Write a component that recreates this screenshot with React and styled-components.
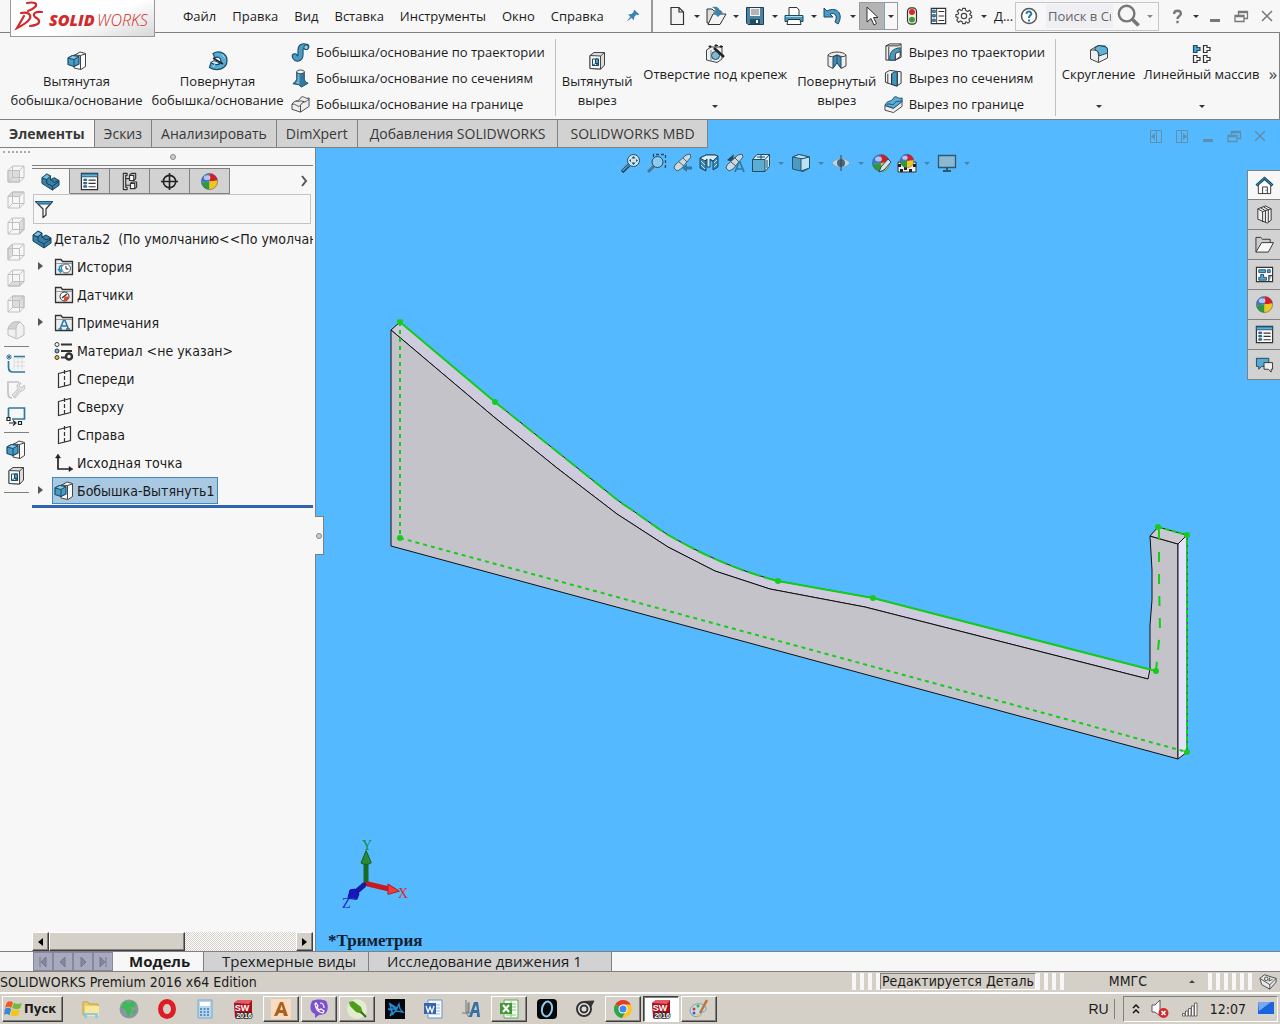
import React, { useState } from "react";
import styled, { createGlobalStyle, css } from "styled-components";

const theme = {
  ui: '"Open Sans", "Noto Sans", sans-serif',
  tahoma: '"DejaVu Sans Condensed", "DejaVu Sans", sans-serif',
  face: "#f7f7f7",
  line: "#808080",
  tab: "#d2d2d2",
  sky: "#55b9ff",
  classic: "#d4d0c8",
};

const GlobalStyle = createGlobalStyle`
  * { box-sizing: border-box; }
  body { margin: 0; background: ${theme.face}; overflow: hidden; }
  button, input { font: inherit; color: inherit; }
`;

/* ---------- icons ---------- */

const blue = "#4a9cc4";
const dark = "#1d5578";
const ink = "#333";
const st = { stroke: ink, strokeWidth: 1.2, fill: "none" };

const Ball = () => (
  <g>
    <path d="M10 10V1.500A8.500 8.500 0 0 0 1.500 11Z" fill="#3e74d8" />
    <path d="M10 10V1.500A8.500 8.500 0 0 1 18.500 9Z" fill="#cf1f2b" />
    <path d="M10 10L1.500 11A8.500 8.500 0 0 0 10 18.500Z" fill="#2f9a3c" />
    <path d="M10 10L18.500 9A8.500 8.500 0 0 1 10 18.500Z" fill="#f0c81c" />
    <circle cx="10" cy="10" r="8.500" fill="none" stroke="#444" strokeOpacity=".5" />
    <ellipse cx="7.500" cy="6" rx="3.500" ry="2.500" fill="#fff" opacity=".6" />
  </g>
);

const Folder = ({ children }) => (
  <g>
    <path d="M1.500 17.500V2.500H7L8.500 4.500H18.500V17.500Z" fill="#eee" stroke={ink} strokeWidth="1.300" />
    <path d="M2 6.500H18" stroke="#999" />
    {children}
  </g>
);

const Binoculars = () => (
  <g stroke="#3b6277" fill="#cfd8dd">
    <path d="M2 12L13 2L17 1L18 4L8 16L4 18L1 15Z" />
    <path d="M6 9L11 13M10 5L14 9" />
  </g>
);

const glyphs = {
  extrude: (
    <g strokeLinejoin="round">
      <path d="M7 4.500L13 1L18.500 2.500V15.500L14 18.500L7 17Z" fill="#fafafa" stroke="#444" />
      <path d="M13.500 4.500L18 3M13.500 4.500V18M7 4L13.500 4.500" stroke="#444" />
      <path d="M1 7L5.500 4.500L12 5.500V13L7 15.500L1 13.500Z" fill={blue} stroke="#174a69" strokeWidth="1.200" />
      <path d="M1 7L7 8.500L12 5.500L5.500 4.500Z" fill="#8cc6e0" stroke="#174a69" />
      <path d="M7 8.500V15.500" stroke="#174a69" />
    </g>
  ),
  revolve: (
    <g>
      <path d="M5 2.500C11-1 19 2 19 9.500C19 18 9 21 1.500 16.500L3 11.500C7 15 12 14 13 10.500C13 6.500 9.500 5 7 7Z" fill="#5bacd3" stroke="#174a69" strokeWidth="1.200" />
      <path d="M5 7L15 13" stroke="#222" strokeWidth="1.500" />
      <path d="M3 11.500L6 9.500L12 12" fill="#b7e1f4" stroke="#174a69" />
      <path d="M14 3L17 7M5 16L7 13" stroke="#b7e1f4" />
    </g>
  ),
  sweep: (
    <g fill="none" strokeLinecap="round">
      <path d="M4 14C5 18 10 17 10 12V8C10 3 13 3 16 4" stroke="#174a69" strokeWidth="6.500" />
      <path d="M4 14C5 18 10 17 10 12V8C10 3 13 3 16 4" stroke={blue} strokeWidth="4.300" />
      <circle cx="16" cy="4.500" r="2.500" fill="#8cc6e0" stroke="#174a69" />
    </g>
  ),
  loft: (
    <g stroke="#174a69" strokeLinejoin="round">
      <path d="M6 3V10C6 12 4 14 2 15.500L8 16.500L11 19L18 15C15 14 14 12 14 10V3Z" fill="#34799f" />
      <path d="M7 5L9 4V16L8 16L5 15Q7 13 7 10Z" fill="#6fb2d2" stroke="none" />
      <ellipse cx="10" cy="3" rx="4" ry="2" fill="#e6f3f8" stroke="#444" />
    </g>
  ),
  boundary: (
    <g stroke="#444" fill="#eee" strokeLinejoin="round">
      <path d="M1 10C4 4 7 9 11 2C14 1 16 5 19 3V12L10 18L1 15Z" />
      <path d="M1 10C5 8 7 14 10 11C12 6 15 9 19 4M10 11V18M5 6C8 8 9 5 14 7" fill="none" />
    </g>
  ),
  boundaryCut: (
    <g stroke="#174a69" strokeLinejoin="round">
      <path d="M1 11L10 14L19 6V12L10 18.500L1 16Z" fill="#eee" stroke="#444" />
      <path d="M1 11C4 4 7 9 11 2C14 1 16 5 19 3V7L10 14Z" fill="#5eadd3" />
      <path d="M3 10C7 8 8 12 11 9C13 5 15 8 18 6" fill="none" />
    </g>
  ),
  cut: (
    <g stroke="#444" strokeLinejoin="round">
      <path d="M3 4.500L7 1.500H17.500V14L14 18L3 17.500Z" fill="#ddd" />
      <path d="M3 4.500L13.500 5V18L3 17.500Z" fill="#f7f7f7" />
      <path d="M13.500 5L17.500 1.500" />
      <path d="M5.500 8H11.500V14.500H5.500Z" fill="#fff" stroke="#174a69" />
      <path d="M8.500 8H11.500V14.500L8.500 12.500Z" fill={blue} stroke="#174a69" />
      <path d="M5.500 14.500L8.500 12.500H11.500" fill="none" stroke="#174a69" />
    </g>
  ),
  hole: (
    <g stroke="#444" strokeLinejoin="round">
      <path d="M1.500 6L6 3H17V15L12 18.500L1.500 16Z" fill="#eee" />
      <path d="M6 6V17" stroke="#888" />
      <circle cx="10.500" cy="11.500" r="4" fill="#81b9d2" stroke="#174a69" />
      <path d="M9 4L19 13" stroke="#222" strokeWidth="2.500" />
      <path d="M5 1V4M3.500 2.500H6.500M16 1V4M14.500 2.500H18M11 0V3M9.500 1.500H13" stroke="#222" />
    </g>
  ),
  revolveCut: (
    <g strokeLinejoin="round">
      <path d="M1 4C4 0 16 0 19 4V15L14 17.500L10 11L6 17.500L1 15Z" fill="#eee" stroke="#444" />
      <path d="M6 6L10 4L14 6V17L10 12L6 17Z" fill="#3e8db4" stroke="#174a69" />
      <path d="M1 4C3 7 8 5 10 4C13 5 17 7 19 4M10 4V12" fill="none" stroke="#444" />
    </g>
  ),
  sweepCut: (
    <g stroke="#333">
      <path d="M2 3L6 1H18V15L12 18H2Z" fill="#eee" />
      <path d="M5 4V18M2 3H15L18 1" fill="none" />
      <path d="M6 18C6 9 9 6 17 5V13L12 14V18Z" fill="#4b9ac0" stroke="#174a69" />
      <path d="M12 18V11L17 9V14Z" fill="#fff" />
    </g>
  ),
  loftCut: (
    <g stroke="#333" strokeLinejoin="round">
      <path d="M1.500 4L6 1.500L18 3V15L13 18L1.500 14Z" fill="#f3f3f3" />
      <path d="M8 5L11 3H14V18L8 16Z" fill="#4596be" stroke="#174a69" />
      <path d="M4 5V15M8 5V16M14 4V18" />
    </g>
  ),
  fillet: (
    <g stroke="#444" strokeLinejoin="round">
      <path d="M1.500 6L9 1.500L16 2C18 3 18.500 5 18.500 6V14L9.500 18.500L1.500 15Z" fill="#f0f0f0" />
      <path d="M6 3.500L10 1.500L17 3C18.500 4 18.500 6 18.500 9L10 12C10 9 9.500 7 6 6Z" fill="#65b1d6" stroke="#174a69" />
      <path d="M1.500 6L6 6C9 7 10 8 9.500 18.500" fill="none" />
    </g>
  ),
  pattern: (
    <g stroke="#333" strokeWidth="1.200" fill="#f7f7f7">
      <path d="M1.500 1.500H5V3.500H8V6.500H5V8.500H1.500Z" fill="#4da3cc" stroke="#174a69" />
      <path d="M11.500 1.500H15V3.500H18V6.500H15V8.500H11.500Z" />
      <path d="M1.500 11.500H5V13.500H8V16.500H5V18.500H1.500Z" />
      <path d="M11.500 11.500H15V13.500H18V16.500H15V18.500H11.500Z" />
    </g>
  ),
  pin: (
    <g fill="#3c84ad">
      <path d="M12 1L19 8L17 9L15 8L12 11L11 16L3 8L8 7L11 4L11 2Z" />
      <path d="M6 11L1 18L8 13Z" />
    </g>
  ),
  newDoc: <path d="M4 1.500H12L16.500 6V18.500H4ZM12 1.500V6H16.500" fill="#f4f4f4" stroke={ink} strokeWidth="1.200" />,
  open: (
    <g stroke={ink} strokeLinejoin="round">
      <path d="M1 17V3H6L8 5H15V17Z" fill="#ddd" />
      <path d="M2 18.500L7 8H20L14 18.500Z" fill="#f4f4f4" />
      <path d="M6 1C11 0 14 2 14 6H17L12 11L7 6H10C10 4 9 3 6 1Z" fill="#3c84ad" stroke="none" />
    </g>
  ),
  save: (
    <g>
      <path d="M1.500 1.500H18.500V18.500H3L1.500 17Z" fill="#4b83a3" stroke="#1b3e54" />
      <path d="M5 2H15V10H5Z" fill="#f4f4f4" />
      <path d="M6 4H14M6 6H14M6 8H14" stroke="#777" />
      <path d="M5 13H15V18H5Z" fill="#244b60" />
      <path d="M11 14H13V17H11Z" fill="#fff" />
    </g>
  ),
  print: (
    <g stroke={ink}>
      <path d="M5 9V1.500H13L15 4V9" fill="#fff" />
      <path d="M1 9.500H19V15.500H1Z" fill="#4d99bd" stroke="#174a69" />
      <path d="M4 13.500H16L17 18.500H3Z" fill="#fff" />
      <path d="M2 10.500H18" stroke="#aadaf0" />
    </g>
  ),
  undo: <path d="M1 2V11H10L7 8C12 6 15 10 12 16L15 18C21 8 14 0 4 5Z" fill="#4b9bc5" stroke="#174a69" />,
  cursor: <path d="M5 1V16L9 12.500L12 19L14.500 17.500L11.500 11.500H16Z" fill="#fff" stroke="#333" />,
  traffic: (
    <g>
      <rect x="5" y="1" width="10" height="18" rx="4" fill="#eee" stroke={ink} strokeWidth="1.300" />
      <circle cx="10" cy="5.500" r="3.300" fill="#d72b16" />
      <circle cx="10" cy="14" r="3.300" fill="#3b9c34" />
    </g>
  ),
  list: (
    <g>
      <path d="M2.500 1.500H18.500V18.500H2.500Z" fill="#fff" stroke={ink} strokeWidth="1.300" />
      <path d="M8.500 2V18" stroke={ink} />
      <path d="M4 3.500H7V6H4ZM4 8.500H7V11H4ZM4 13.500H7V16H4Z" fill={blue} stroke={dark} />
      <path d="M10.500 5H17M10.500 10H17M10.500 15H17" stroke={ink} strokeWidth="1.300" />
    </g>
  ),
  gear: (
    <g fill="none" stroke="#444">
      <path d="M8.500 1.500H11.500L12 4L14 5L16 3.500L18 6L16.500 8L17 9L18.500 9.500V12L16 12.500L15.500 14L16.500 16L14.500 18L12.500 16.500L11.500 17V18.500H8.500L8 16.500L6 15.500L4 17L2 14.500L3.500 12.500L3 11.500L1 11V8.500L3.500 8L4 6.500L2.500 4.500L5 2.500L7 4L8 3.500Z" strokeWidth="1.300" strokeLinejoin="round" />
      <circle cx="10" cy="10" r="3" strokeWidth="1.300" />
    </g>
  ),
  help: (
    <g>
      <circle cx="10" cy="10" r="7.500" fill="#fff" stroke="#555" strokeWidth="1.500" />
      <path d="M7.500 8C7.500 4.500 12.500 5 12.300 8C12 9.500 10 9.500 10 12M10 13.500V15.500" fill="none" stroke="#287aa8" strokeWidth="2" />
    </g>
  ),
  question: <path d="M6 7C6 2 14 2 14 7C14 9 10 9.500 10 13M10 15V18" fill="none" stroke="#777" strokeWidth="2.700" />,
  magnifier: (
    <g fill="none" stroke="#777">
      <circle cx="8" cy="8" r="6.500" strokeWidth="2" />
      <path d="M12.500 12.500L18 18" strokeWidth="3" />
    </g>
  ),
  minimize: <path d="M5 13H15V16H5Z" fill="currentColor" />,
  restore: (
    <g fill="none" stroke="currentColor" strokeWidth="1.300">
      <path d="M4 9.500H13V15.500H4ZM4 10.500H13M7.500 9V5.500H16.500V12.500H13M7.500 6.500H16.500" />
    </g>
  ),
  close: <path d="M5 5L15 15M15 5L5 15" stroke="currentColor" strokeWidth="1.500" />,
  paneLeft: (
    <g>
      <path d="M4.500 4.500H15.500V16.500H4.500ZM10.500 4.500V16.500" fill="none" stroke="currentColor" />
      <path d="M9 7V14L5 10.500Z" fill="currentColor" />
    </g>
  ),
  paneRight: (
    <g>
      <path d="M4.500 4.500H15.500V16.500H4.500ZM9.500 4.500V16.500" fill="none" stroke="currentColor" />
      <path d="M11 7V14L15 10.500Z" fill="currentColor" />
    </g>
  ),
  part: (
    <g stroke="#123f5a" strokeLinejoin="round">
      <path d="M1 6L6 2L10 4V8L14 6L19 9V14L12 19L1 12Z" fill="#397fa6" />
      <path d="M1 6L6 8L10 4M6 8V12L12 15L19 10M12 15V19M10 8L14 11L19 9" fill="none" stroke="#123f5a" />
      <path d="M2 6L6 3L9 4.500L6 7Z" fill="#7fc0df" stroke="none" />
    </g>
  ),
  sheet: (
    <g>
      <path d="M1.500 1.500H18.500V18.500H1.500Z" fill="#fff" stroke={ink} strokeWidth="1.300" />
      <path d="M1.500 2H18.500V5H1.500Z" fill="#5eb2da" stroke={dark} />
      <path d="M4 7.500H7V9H4ZM4 11H7V12.500H4ZM4 14.500H7V16H4Z" fill={blue} stroke={dark} />
      <path d="M9 8.500H16.500M9 12H16.500M9 15.500H16.500" stroke={ink} strokeWidth="1.200" />
    </g>
  ),
  config: (
    <g {...st} strokeLinejoin="round">
      <path d="M3.500 1.500H7.500V3.500H6V16H7.500V18.500H3.500ZM6 7H10M6 14H11" />
      <path d="M10 3.500H14.500V9H10ZM11 12H15.500V17.500H11Z" fill="#f7f7f7" />
      <path d="M10 3.500L12 1.500H16.500V7L14.500 9M11 12L13 10.500H17.500V16L15.500 17.500" />
    </g>
  ),
  target: (
    <g fill="none" stroke="#222" strokeWidth="1.700">
      <circle cx="10" cy="10" r="6.500" />
      <path d="M10 1V19M1 10H19" />
    </g>
  ),
  ball: <Ball />,
  filter: (
    <g strokeLinejoin="round">
      <path d="M1.500 2.500H18.500L12 10V16L9 18.500V10Z" fill="#f7f7f7" stroke={ink} strokeWidth="1.200" />
      <path d="M1.500 2.500H18.500L16 5H4Z" fill={blue} stroke={dark} />
    </g>
  ),
  history: (
    <Folder>
      <circle cx="12" cy="11.500" r="4.500" fill="#fff" stroke="#45606e" />
      <path d="M12 9V12H14.500" fill="none" stroke={ink} />
      <path d="M8.500 8C5 9 5 11 6 13M4 12L6.500 15L8 12" fill="none" stroke="#2c8abb" strokeWidth="1.700" />
    </Folder>
  ),
  sensor: (
    <Folder>
      <circle cx="10.500" cy="11.500" r="4.500" fill="#fff" stroke={ink} />
      <path d="M10.500 11.500H15A4.500 4.500 0 0 1 9.500 16Z" fill="#d94a32" />
      <path d="M8 13L13 9" stroke={ink} strokeWidth="1.500" />
    </Folder>
  ),
  note: (
    <Folder>
      <path d="M6 16L9.500 7.500H11L14.500 16M8 13H12.500M4.500 16H8M12 16H16" fill="none" stroke="#2578a3" strokeWidth="1.500" />
    </Folder>
  ),
  material: (
    <g stroke={ink}>
      <circle cx="3" cy="3.500" r="2" fill="#fff" />
      <circle cx="3" cy="10" r="2" fill="#68b9e0" />
      <circle cx="3" cy="16.500" r="2" fill="#eec02b" />
      <path d="M7 3.500H18M7 10H18M7 16.500H12" strokeWidth="1.800" />
      <circle cx="15" cy="15.500" r="3" fill="#f7f7f7" strokeWidth="2.500" />
    </g>
  ),
  plane: (
    <g {...st}>
      <path d="M4.500 4.500L16.500 1.500V15.500L4.500 18.500Z" />
      <path d="M10.500 1V19" strokeDasharray="4 2" />
    </g>
  ),
  origin: (
    <g fill="none" stroke="#222" strokeWidth="1.700">
      <path d="M4 3V16H17" />
      <path d="M1.500 5L4 1L6.500 5ZM15 13.500L19 16L15 18.500Z" fill="#222" strokeWidth=".5" />
    </g>
  ),
  sketch: (
    <g fill="none">
      <path d="M8 4H19M8 8H19M8 12H19M8 3V16M12 3V16M16 3V16" stroke="#ddd" />
      <path d="M8 2.500H19M2.500 7V13C2.500 17 4 18 7 18H19" stroke="#2d789e" strokeWidth="1.700" />
      <path d="M3 0V6M0 3H6M1 1L5 5M5 1L1 5" stroke="#2d789e" />
    </g>
  ),
  repair: (
    <g fill="none" stroke="#c3c3c3">
      <path d="M13 2H2V13C2 16 3 18 6 18" strokeWidth="1.700" />
      <path d="M8 17L14 9M18 5L16 8L13 6L15 3C11 3 10 6 12 9L6 15L9 18L15 11C18 11 20 8 18 5" fill="#e6e6e6" />
    </g>
  ),
  rectTool: (
    <g fill="none" stroke="#222">
      <path d="M2.500 2H18.500V13H12M2.500 2V11M6 13H12" stroke="#2d789e" strokeWidth="1.700" />
      <path d="M1 11.500H4V14.500H1ZM12.500 15.500H15.500V18.500H12.500ZM3 17H9M7 14.500L10 17L7 19.500" strokeWidth="1.200" />
    </g>
  ),
  house: (
    <g>
      <path d="M3.500 9V18.500H16.500V9L10 3Z" fill="#fff" stroke={ink} />
      <path d="M8 18V11.500H13V18M11 15H12" fill="none" stroke={ink} />
      <path d="M1.500 10L10 2.500L18.500 10" fill="none" stroke="#174a69" strokeWidth="3" />
      <path d="M2 9.500L10 2.500L18 9.500" fill="none" stroke="#4796bd" />
    </g>
  ),
  books: (
    <g stroke={ink} fill="#f0f0f0" strokeLinejoin="round">
      <path d="M3 4L11 1L17 4V16L13 19L3 15Z" />
      <path d="M3 4L8 7V18M6 3L11 6V18M9 2L14 5V18M8 7L17 4" fill="none" />
    </g>
  ),
  folderOpen: (
    <g stroke={ink} strokeLinejoin="round">
      <path d="M1 18V2.500H6L8 4.500H16V8" fill="#ccc" />
      <path d="M1 18L7 8H19.500L14 18Z" fill="#f8f8f8" />
    </g>
  ),
  palette: (
    <g>
      <path d="M1.500 2.500H18.500V17.500H1.500Z" fill="#fff" stroke={ink} strokeWidth="1.200" />
      <path d="M4 5H11V8H4ZM13 5H16V8H13ZM6 10H9V13H12V16H4V13H6Z" fill="#5ba7ca" stroke={dark} />
      <path d="M14.500 17V11H18" fill="#999" stroke={ink} />
    </g>
  ),
  chat: (
    <g strokeLinejoin="round">
      <path d="M1.500 3.500H14.500V12H7L4 15V12H1.500Z" fill="#5ba9ce" stroke="#174a69" />
      <path d="M9.500 8H18.500V15H17V18L14 15H9.500Z" fill="#eee" stroke={ink} />
    </g>
  ),
  zoomFit: (
    <g fill="none" stroke="#29485c">
      <path d="M1 19L8 12" stroke="#174a69" strokeWidth="3.500" />
      <path d="M1.500 18L7.500 12" stroke="#a9d4ea" />
      <circle cx="12.500" cy="7.500" r="6" fill="#c9e7f6" />
      <path d="M12.500 3L14.500 5.500H10.500ZM12.500 12L14.500 9.500H10.500ZM8 7.500L10 6V9ZM17 7.500L15 6V9Z" fill="#29485c" stroke="none" />
    </g>
  ),
  zoomArea: (
    <g fill="none" stroke="#29485c">
      <path d="M6.500 4V1.500H18.500V14H16" strokeDasharray="3 2" strokeWidth="1.300" />
      <path d="M1 19L7 13" stroke="#4f7790" strokeWidth="3" />
      <circle cx="10.500" cy="9" r="5.500" fill="#8bcbf0" />
    </g>
  ),
  previous: (
    <g>
      <Binoculars />
      <path d="M19 13.500V16.500H14V19L9 15L14 11V13.500Z" fill="#3177a0" />
    </g>
  ),
  section: (
    <g stroke="#174a69" strokeLinejoin="round">
      <path d="M1 5L7 2H16L19 3V14L14 17V8L7 7V18L1 15Z" fill="#3f88ad" />
      <path d="M1 5L7 2H16L19 3L14 8L11 6V14H8V6L6 8Z" fill="#d9ebf3" />
      <path d="M2 8L6 12M2 12L6 16M15 10L18 7M15 14L18 11" stroke="#b6dced" />
    </g>
  ),
  annotationView: (
    <g>
      <path d="M2 7L9 1L8 5L16 1L9 10Z" fill="#24485e" />
      <Binoculars />
      <path d="M10 19L14 9H15L19 19M12 16H17" stroke="#2d789e" strokeWidth="1.700" fill="none" />
    </g>
  ),
  orient: (
    <g stroke="#1e4d67" strokeLinejoin="round">
      <path d="M1.500 6.500L6 1.500H18.500V13.500L14 18.500H1.500Z" fill="#d4edf9" />
      <path d="M1.500 6.500H14V18.500H1.500Z" fill="#5cadd2" />
      <path d="M14 6.500L18.500 1.500M6 4H14M10 2V6M16 7V15" fill="none" />
    </g>
  ),
  display: (
    <g stroke="#245670" strokeLinejoin="round">
      <path d="M1.500 4L8 1.500L18.500 4V15L12 18.500L1.500 16Z" fill="#4b9bc2" />
      <path d="M1.500 4L12 6L18.500 4L8 1.500Z" fill="#bde2f2" />
      <path d="M10 6V18L18.500 15V4Z" fill="#bde2f2" />
    </g>
  ),
  eye: (
    <g>
      <path d="M1 10C5 4 15 4 19 10C15 16 5 16 1 10Z" fill="#b8d6e6" stroke="#7eabc3" />
      <circle cx="10" cy="10" r="4" fill="#4c6778" />
      <path d="M10 2V18" stroke="#27475b" />
    </g>
  ),
  appearance: (
    <g>
      <Ball />
      <path d="M8 19L10 14L17 6L20 9L13 17Z" fill="#cfe7f2" stroke="#27475b" />
    </g>
  ),
  scene: (
    <g>
      <path d="M1 9H19V19H1Z" fill="#eee" stroke="#333" />
      <path d="M1 11H4V14H1ZM7 14H10V17H7ZM12 16H15V19H12ZM16 11H19V14H16ZM3 16H6V19H3Z" fill="#222" />
      <g transform="translate(2 0) scale(.8)"><Ball /></g>
    </g>
  ),
  monitor: (
    <g stroke="#2e5870">
      <path d="M1.500 2.500H18.500V14.500H1.500Z" fill="#8cb9d2" strokeWidth="1.300" />
      <path d="M10 15V18M6 18H14" strokeWidth="2" />
    </g>
  ),
  tag: (
    <g stroke="#444" fill="#e8e8e8" strokeLinejoin="round">
      <path d="M1 6L6 2L19 6V10L12 18L3 13Z" />
      <path d="M1 6L12 13L19 6M12 13V18" fill="none" />
      <circle cx="8" cy="6.500" r="2" fill="none" />
      <path d="M12 5L11 9L15 7" fill="none" />
    </g>
  ),
  /* taskbar programs */
  windows: (
    <g>
      <path d="M3 3C5 1 8 1 10 3L8 9C6 7 3 7 1 9Z" fill="#ee5a24" />
      <path d="M11 3C14 5 17 5 20 3L18 9C15 11 12 10 9 9Z" fill="#75b83b" />
      <path d="M1 10C3 8 6 8 8 10L6 17C4 15 1 15 0 17Z" fill="#3a87d4" />
      <path d="M9 10C12 12 15 12 18 10L16 17C13 19 10 18 7 17Z" fill="#f4c51f" />
    </g>
  ),
  explorer: (
    <g>
      <path d="M2 3H7L8 5H17V16H2Z" fill="#e8cc67" stroke="#c5a338" />
      <path d="M4 7H18V17H4Z" fill="#f8e79c" />
      <path d="M3 19V14H17V19H14V16H6V19Z" fill="#8bcbe7" />
    </g>
  ),
  globe: (
    <g>
      <circle cx="10" cy="10" r="9.500" fill="#8a979f" />
      <path d="M4 4C9 0 9 6 12 3C15 0 18 6 16 8L11 8L13 12L9 18L7 11L2 9ZM14 12L18 11L14 17Z" fill="#39bd53" />
    </g>
  ),
  opera: <ellipse cx="10" cy="10" rx="6.500" ry="7.500" fill="none" stroke="#dc1d25" strokeWidth="5" />,
  calc: (
    <g>
      <path d="M3 1H17V19H3Z" fill="#b7d7ef" stroke="#7aa8cf" />
      <path d="M5 3H15V7H5Z" fill="#fff" />
      <path d="M5 10H15M5 13H15M5 16H15" stroke="#5c8dbd" strokeWidth="2" strokeDasharray="2 1.500" />
    </g>
  ),
  solid: (
    <g>
      <path d="M1 4L5 1H19V14L16 19H2Z" fill="#a90e1b" />
      <path d="M1 4L5 1H19L16 5Z" fill="#e25b62" />
      <text x="9" y="12" textAnchor="middle" fontFamily="Liberation Sans" fontSize="9" fontWeight="700" fill="#fff">SW</text>
      <text x="11" y="19" textAnchor="middle" fontFamily="Liberation Sans" fontSize="7" fontWeight="700" fill="#fff" stroke="#222" strokeWidth="1.500" paintOrder="stroke">2016</text>
    </g>
  ),
  letterA: (
    <g>
      <path d="M0 0H20V20H0Z" fill="#fbdcc0" />
      <path d="M3 17L9 3H12L17 17H13L12 14H8L6 17ZM9 11H12L10.500 6Z" fill="#a8621b" fillRule="evenodd" />
    </g>
  ),
  viber: (
    <g>
      <path d="M3 2C7 0 13 0 17 2C20 7 19 12 16 15L10 16L6 19V15C0 13 1 6 3 2Z" fill="#7d51d0" />
      <path d="M6 5C7 11 9 13 14 14L15 12L12 10L10 11L8 8L9 7L7 4ZM11 4C14 4 15 6 15 9" stroke="#fff" strokeWidth="1.200" fill="none" />
    </g>
  ),
  pen: (
    <g>
      <circle cx="10" cy="10" r="10" fill="#e2eccf" />
      <path d="M2 3L6 2L14 8L16 15L9 13L3 7Z" fill="#4d9b16" />
      <path d="M14 13L19 18" stroke="#2b6e11" strokeWidth="2" />
    </g>
  ),
  neon: (
    <g>
      <path d="M0 0H20V20H0Z" fill="#05070c" />
      <path d="M4 4L12 9L14 5L15 10L18 13L11 12L5 17L7 12L3 10H11L5 6L8 15L13 8" fill="none" stroke="#2589d0" strokeWidth="1.300" />
    </g>
  ),
  word: (
    <g>
      <path d="M5 1H19V19H5Z" fill="#f5faff" stroke="#6a91c4" />
      <path d="M7 6H17M7 9H17M7 12H17M7 15H17" stroke="#9db8dc" />
      <path d="M1 4H13V15H1Z" fill="#3467b0" />
      <path d="M3 7L5 13L7 8L9 13L11 7" fill="none" stroke="#fff" strokeWidth="1.300" />
    </g>
  ),
  compass: (
    <g>
      <path d="M5 1V13H8V3M1 14H11L8 18L5 14M7 4V14" stroke="#777" fill="#ccc" />
      <path d="M8 18L13 3H17L19 18H16V14H12L11 18ZM13 11H16L15 6Z" fill="#3670a4" fillRule="evenodd" />
    </g>
  ),
  excel: (
    <g>
      <path d="M5 1H19V19H5Z" fill="#f1faef" stroke="#60aa58" />
      <path d="M12 5H17M12 8H17M12 11H17M7 16H17M12 2V18" stroke="#8cc486" />
      <path d="M1 4H13V15H1Z" fill="#46953b" />
      <path d="M4 6L10 13M10 6L4 13" stroke="#fff" strokeWidth="2" />
    </g>
  ),
  oval: (
    <g>
      <rect width="20" height="20" rx="4" fill="#05070a" />
      <ellipse cx="10" cy="10" rx="5" ry="7.500" transform="rotate(12 10 10)" fill="none" stroke="#8ccbea" strokeWidth="2" />
    </g>
  ),
  caliper: (
    <g fill="none" stroke="#333">
      <path d="M8 2.500L19 2L15 9" fill="#333" />
      <circle cx="9" cy="10" r="7" strokeWidth="2" fill="#eee" />
      <circle cx="9" cy="10" r="3.500" fill="#ddd" strokeWidth="2" />
    </g>
  ),
  chrome: (
    <g>
      <circle cx="10" cy="10" r="9" fill="#f7c928" />
      <path d="M10 10L2.200 5.500A9 9 0 0 1 17.800 5.500H10Z" fill="#e23b2e" />
      <path d="M10 10L2.200 5.500A9 9 0 0 0 9 19L13 12Z" fill="#2ea44f" />
      <circle cx="10" cy="10" r="4.500" fill="#fff" />
      <circle cx="10" cy="10" r="3.500" fill="#4285f4" />
    </g>
  ),
  paint: (
    <g>
      <path d="M1 12C1 4 15 2 17 9C18 13 12 12 12 15C11 19 2 19 1 12Z" fill="#c8dce7" stroke="#7c9cad" />
      <circle cx="5" cy="10" r="1.500" fill="#d33" /><circle cx="9" cy="7" r="1.500" fill="#4a4" />
      <circle cx="5" cy="14" r="1.500" fill="#36b" /><circle cx="9" cy="16" r="1.500" fill="#ec3" />
      <path d="M18 1L11 14" stroke="#bd7437" strokeWidth="2.500" />
    </g>
  ),
  speaker: (
    <g>
      <path d="M2 6H5L10 1V17L5 13H2Z" fill="#fff" stroke="#555" />
      <circle cx="13.500" cy="14" r="5" fill="#d52a2a" />
      <path d="M11.500 12L15.500 16M15.500 12L11.500 16" stroke="#fff" strokeWidth="1.700" />
    </g>
  ),
  signal: (
    <path d="M2.500 14.500H5V17H2.500ZM5.500 12H8V17H5.500ZM8.500 9.500H11V17H8.500ZM11.500 7H14V17H11.500ZM14.500 4H17V17H14.500Z" fill="#fff" stroke="#666" />
  ),
  desktop: (
    <g>
      <path d="M2 3H18V16H2Z" fill="#1c64dc" />
      <path d="M2 3H15L3 12Z" fill="#76a9f2" />
      <path d="M1 15H19V18H1Z" fill="#cfd4d8" />
    </g>
  ),
};

const Svg = styled.svg`
  display: block;
  flex: none;
  overflow: visible;
`;

const Icon = ({ name, size = 20 }) => (
  <Svg width={size} height={size} viewBox="0 0 20 20" aria-hidden="true">{glyphs[name]}</Svg>
);

/* wireframe cube used by the view toolbar, one face is filled */
const cubeFaces = [
  "M2 6.500H13.500V18H2Z",
  "M2 6.500L6.500 2H18L13.500 6.500Z",
  "M13.500 6.500L18 2V13.500L13.500 18Z",
  "M2 6.500L6.500 2V13.500L2 18Z",
  "M2 18L6.500 13.500H18L13.500 18Z",
  "M6.500 2H18V13.500H6.500Z",
];

const Cube = ({ face }) => (
  <Svg width="20" height="20" viewBox="0 0 20 20" aria-hidden="true">
    {face < 6 ? (
      <g stroke="#c0c0c0" fill="none">
        <path d={cubeFaces[face]} fill="#dcdcdc" />
        <path d="M2 6.500H13.500V18H2ZM6.500 2H18V13.500H6.500ZM2 6.500L6.500 2M13.500 6.500L18 2M13.500 18L18 13.500M2 18L6.500 13.500" />
      </g>
    ) : (
      <g stroke="#bdbdbd" fill="#f0f0f0" strokeLinejoin="round">
        <path d="M2 9L8 2H14L18 6V15L11 19L2 15Z" />
        <path d="M2 9C3 5 5 3 8 2H14C11 4 10 6 10 9Z" fill="#d2d2d2" />
        <path d="M10 9V18" />
      </g>
    )}
  </Svg>
);

/* ---------- shared parts ---------- */

const Caret = styled.span`
  width: 0;
  height: 0;
  border: 3px solid transparent;
  border-top-color: ${(p) => p.$color || "#333"};
  border-bottom-width: 0;
`;

const IconButton = styled.button`
  display: flex;
  align-items: center;
  justify-content: center;
  flex: none;
  width: ${(p) => p.$w || 26}px;
  height: 26px;
  padding: 0;
  border: 0;
  background: none;
  color: #777;
`;

const Screen = styled.div`
  display: flex;
  flex-direction: column;
  height: 100vh;
  overflow: hidden;
  background: ${theme.face};
  color: #1c1c1c;
  font: 13px/20px ${theme.ui};
`;

/* ---------- title bar ---------- */

const TitleBar = styled.header`
  display: flex;
  align-items: center;
  height: 33px;
  flex: none;
  border-bottom: 1px solid ${theme.line};
`;

const Logo = styled.a`
  align-self: flex-start;
  width: 145px;
  height: 37px;
  margin-left: 10px;
  z-index: 1;
  flex: none;
  border: 1px solid #999;
  border-top: 0;
  background: linear-gradient(160deg, #fff 55%, #d8d8d8);
`;

const Menu = styled.nav`
  display: flex;
  align-items: center;
  gap: 16px;
  padding-left: 28px;
`;

const MenuItem = styled.button`
  padding: 0;
  border: 0;
  background: none;
  white-space: nowrap;
`;

const QuickBar = styled.div`
  display: flex;
  align-items: center;
  height: 100%;
  margin-left: auto;
  padding-left: 11px;
  border-left: 2px solid #999;
`;

const SelectTool = styled.div`
  display: flex;
  border: 1px solid #999;
  margin-right: 1px;
  & > :first-child { background: #b4b4b4; border-right: 1px solid #7fa3bb; }
`;

const More = styled.span`
  width: 25px;
  padding-left: 4px;
`;

const Search = styled.label`
  display: flex;
  align-items: center;
  width: 144px;
  height: 29px;
  margin-right: 5px;
  border: 1px solid #c6c6c6;
`;

const SearchInput = styled.input`
  width: 67px;
  height: 24px;
  margin: 0 4px;
  padding: 0 2px;
  border: 0;
  background: #eeeef3;
  &::placeholder { color: #666; opacity: 1; }
`;

const menus = ["Файл", "Правка", "Вид", "Вставка", "Инструменты", "Окно", "Справка"];

const SolidLogo = () => (
  <svg width="143" height="34" viewBox="0 0 143 34" role="img" aria-label="SOLIDWORKS">
    <g fill="none" stroke="#d22a2a" strokeWidth="2.200" strokeLinecap="round">
      <path d="M16 3C24 1.500 27 4 24 7C22 9 20 10 17 11" />
      <path d="M10 13C20 11 21 17 17 21C14 24 10 26 6 28L13 16" />
      <path d="M31 12C24 11 21 14 24 17C31 21 29 25 19 26" />
    </g>
    <g fill="#d22a2a" fontFamily="Open Sans, sans-serif" fontStyle="italic">
      <text x="38" y="26" fontSize="16" fontWeight="800">SOLID</text>
      <text x="86" y="26" fontSize="16" fontWeight="300">WORKS</text>
    </g>
  </svg>
);

const Title = () => (
  <TitleBar>
    <Logo href="#home"><SolidLogo /></Logo>
    <Menu>
      {menus.map((m) => <MenuItem key={m}>{m}</MenuItem>)}
      <IconButton aria-label="Закрепить"><Icon name="pin" size={14} /></IconButton>
    </Menu>
    <QuickBar>
      {["newDoc", "open", "save", "print", "undo"].map((n) => (
        <React.Fragment key={n}>
          <IconButton aria-label={n}><Icon name={n} /></IconButton>
          <IconButton $w={13} aria-label={n + " menu"}><Caret /></IconButton>
        </React.Fragment>
      ))}
      <SelectTool>
        <IconButton $w={25} aria-label="select"><Icon name="cursor" /></IconButton>
        <IconButton $w={12} aria-label="select menu"><Caret /></IconButton>
      </SelectTool>
      {["traffic", "list", "gear"].map((n) => (
        <IconButton key={n} aria-label={n}><Icon name={n} size={18} /></IconButton>
      ))}
      <IconButton $w={13} aria-label="options menu"><Caret /></IconButton>
      <More>Д...</More>
      <Search>
        <IconButton as="span"><Icon name="help" /></IconButton>
        <SearchInput placeholder="Поиск в Справке" aria-label="Поиск в Справке" />
        <Icon name="magnifier" size={24} />
        <IconButton as="span" $w={18}><Caret $color="#888" /></IconButton>
      </Search>
      <IconButton aria-label="help"><Icon name="question" size={17} /></IconButton>
      <IconButton $w={12} aria-label="help menu"><Caret /></IconButton>
      {["minimize", "restore", "close"].map((n) => (
        <IconButton key={n} aria-label={n}><Icon name={n} /></IconButton>
      ))}
    </QuickBar>
  </TitleBar>
);

/* ---------- ribbon ---------- */

const RibbonBar = styled.section`
  display: flex;
  flex: none;
  height: 87px;
  padding-left: 6px;
  border-bottom: 1px solid ${theme.line};
  border-right: 1px solid ${theme.line};
`;

const BigTool = styled.button`
  display: flex;
  flex-direction: column;
  align-items: center;
  flex: 0 0 ${(p) => p.$w}px;
  padding: ${(p) => (p.$menu ? 11 : 18)}px 0 0;
  border: 0;
  background: none;
  line-height: 19px;
  white-space: pre-line;
  & > span { margin-top: 1px; }
  & > i { margin-top: 21px; }
`;

const ToolList = styled.div`
  display: flex;
  flex-direction: column;
  padding: 6px 10px 0 3px;
`;

const SmallTool = styled.button`
  display: flex;
  align-items: center;
  gap: 6px;
  height: 26px;
  padding: 0;
  border: 0;
  background: none;
  white-space: nowrap;
`;

const Divider = styled.div`
  width: 1px;
  margin: 6px 1px 3px 0;
  background: #c0c0c0;
`;

const Overflow = styled(IconButton)`
  align-self: center;
  margin-left: auto;
  padding-bottom: 4px;
  color: #444;
  font-size: 17px;
`;

const Tool = ({ icon, label, w, menu }) => (
  <BigTool $w={w} $menu={menu}>
    <Icon name={icon} />
    <span>{label}</span>
    {menu && <Caret as="i" />}
  </BigTool>
);

const List = ({ items }) => (
  <ToolList>
    {items.map(([icon, label]) => (
      <SmallTool key={label}><Icon name={icon} size={19} />{label}</SmallTool>
    ))}
  </ToolList>
);

const Ribbon = () => (
  <RibbonBar>
    <Tool icon="extrude" w={141} label={"Вытянутая\nбобышка/основание"} />
    <Tool icon="revolve" w={141} label={"Повернутая\nбобышка/основание"} />
    <List items={[
      ["sweep", "Бобышка/основание по траектории"],
      ["loft", "Бобышка/основание по сечениям"],
      ["boundary", "Бобышка/основание на границе"],
    ]} />
    <Divider />
    <Tool icon="cut" w={81} label={"Вытянутый\nвырез"} />
    <Tool icon="hole" w={155} label="Отверстие под крепеж" menu />
    <Tool icon="revolveCut" w={88} label={"Повернутый\nвырез"} />
    <List items={[
      ["sweepCut", "Вырез по траектории"],
      ["loftCut", "Вырез по сечениям"],
      ["boundaryCut", "Вырез по границе"],
    ]} />
    <Divider />
    <Tool icon="fillet" w={83} label="Скругление" menu />
    <Tool icon="pattern" w={123} label="Линейный массив" menu />
    <Overflow $w={12} aria-label="more">»</Overflow>
  </RibbonBar>
);

/* ---------- command tabs ---------- */

const TabRow = styled.div`
  display: flex;
  flex: none;
  height: 28px;
  background: ${theme.sky};
`;

const Tab = styled.button`
  padding: 0 ${(p) => (p.$wide ? 12 : 9)}px;
  border: 0;
  border-right: 1px solid ${theme.line};
  border-bottom: 1px solid ${theme.line};
  background: ${(p) => (p.$active ? theme.face : theme.tab)};
  color: #383838;
  font-size: 14px;
  font-weight: ${(p) => (p.$active ? 700 : 400)};
  white-space: nowrap;
`;

const WindowTools = styled.div`
  display: flex;
  align-items: center;
  margin-left: auto;
  padding: 3px 7px 0 0;
  & > button { color: #5f8fae; }
`;

const tabs = ["Элементы", "Эскиз", "Анализировать", "DimXpert", "Добавления SOLIDWORKS", "SOLIDWORKS MBD"];

const CommandTabs = () => {
  const [active, setActive] = useState(0);
  return (
    <TabRow>
      {tabs.map((t, i) => (
        <Tab key={t} $active={i === active} $wide={i > 3} onClick={() => setActive(i)}>{t}</Tab>
      ))}
      <WindowTools>
        {["paneLeft", "paneRight", "minimize", "restore", "close"].map((n) => (
          <IconButton key={n} aria-label={n}><Icon name={n} /></IconButton>
        ))}
      </WindowTools>
    </TabRow>
  );
};

/* ---------- left side ---------- */

const Work = styled.main`
  display: flex;
  flex: 1;
  min-height: 0;
`;

const SideTools = styled.div`
  display: flex;
  flex-direction: column;
  align-items: center;
  flex: 0 0 32px;
  &::before {
    content: "";
    width: 27px;
    margin: 3px 0 8px;
    border-top: 2px dotted #aaa;
  }
  hr { width: 25px; margin: 3px 0 4px; border: 0; border-top: 1px solid ${theme.line}; }
`;

const Panel = styled.aside`
  position: relative;
  display: flex;
  flex-direction: column;
  flex: none;
  width: 284px;
  padding-right: 2px;
  border-right: 1px solid ${theme.line};
`;

const Grip = styled.div`
  display: flex;
  align-items: center;
  justify-content: center;
  height: 18px;
  border-bottom: 1px solid ${theme.line};
`;

const Dot = styled.span`
  width: 6px;
  height: 6px;
  border: 1px solid #888;
  border-radius: 50%;
  background: #ccc;
`;

const PanelTabs = styled.div`
  display: flex;
  height: 26px;
  margin-top: 2px;
`;

const PanelTab = styled.button`
  display: flex;
  align-items: center;
  justify-content: center;
  width: ${(p) => (p.$active ? 38 : 40)}px;
  padding: 0;
  border: 1px solid ${theme.line};
  border-left: 0;
  background: ${theme.tab};
  ${(p) => p.$active && css`
    background: ${theme.face};
    border-bottom-color: ${theme.face};
  `}
`;

const Chevron = styled(IconButton)`
  margin-left: auto;
  margin-right: -4px;
`;

const FilterBox = styled.label`
  display: flex;
  align-items: center;
  height: 30px;
  margin: 0 2px 1px 1px;
  border: 1px solid #c4c4c4;
  input { flex: 1; min-width: 0; border: 0; background: none; outline: 0; }
`;

const Tree = styled.ul`
  flex: 1;
  margin: 0;
  padding: 0;
  overflow: hidden;
  list-style: none;
  font: 14px/28px ${theme.tahoma};
`;

const TreeRow = styled.li`
  display: flex;
  align-items: center;
  height: 28px;
  white-space: nowrap;
  ${(p) => p.$last && css`
    height: 31px;
    padding-bottom: 1px;
    border-bottom: 3px solid #2f63b0;
  `}
`;

const Arrow = styled.span`
  width: 5px;
  height: 8px;
  margin: 0 9px 2px 6px;
  border: 4px solid transparent;
  border-left: 5px solid ${(p) => (p.$show ? "#555" : "transparent")};
  border-right: 0;
`;

const NodeLabel = styled.span`
  display: flex;
  align-items: center;
  gap: 3px;
  height: 27px;
  padding: 0 3px 0 1px;
  border: 1px solid ${(p) => (p.$selected ? "#4188b8" : "transparent")};
  background: ${(p) => (p.$selected ? "#a9c8e2" : "none")};
`;

const Flyout = styled.button`
  position: absolute;
  top: 368px;
  right: -9px;
  z-index: 2;
  display: flex;
  align-items: center;
  justify-content: center;
  width: 9px;
  height: 39px;
  padding: 0;
  border: 1px solid ${theme.line};
  border-left: 0;
  background: ${theme.face};
`;

const raised = css`
  border: 1px solid;
  border-color: #fff #404040 #404040 #fff;
  box-shadow: inset -1px -1px #808080;
  background: ${theme.classic};
`;

const Scroll = styled.div`
  display: flex;
  height: 19px;
  flex: none;
  background: repeating-conic-gradient(#fff 0 25%, ${theme.classic} 0 50%) 0 0 / 2px 2px;
`;

const ScrollButton = styled.button`
  ${raised}
  display: flex;
  align-items: center;
  justify-content: center;
  width: ${(p) => p.$w || 17}px;
  padding: 0;
  margin-left: ${(p) => (p.$end ? "auto" : 0)};
`;

const Triangle = styled.span`
  border: 4px solid transparent;
  border-left: ${(p) => (p.$left ? 0 : "5px solid #000")};
  border-right: ${(p) => (p.$left ? "5px solid #000" : 0)};
`;

const nodes = [
  ["history", "История", true],
  ["sensor", "Датчики"],
  ["note", "Примечания", true],
  ["material", "Материал <не указан>"],
  ["plane", "Спереди"],
  ["plane", "Сверху"],
  ["plane", "Справа"],
  ["origin", "Исходная точка"],
  ["extrude", "Бобышка-Вытянуть1", true],
];

const SideBar = () => (
  <SideTools>
    {[0, 1, 2, 3, 4, 5, 6].map((f) => (
      <IconButton key={f} aria-label={"view " + f}><Cube face={f} /></IconButton>
    ))}
    <hr />
    {["sketch", "repair", "rectTool"].map((n) => <IconButton key={n} aria-label={n}><Icon name={n} /></IconButton>)}
    <hr />
    {["extrude", "cut"].map((n) => <IconButton key={n} aria-label={n}><Icon name={n} /></IconButton>)}
    <hr />
  </SideTools>
);

const FeaturePanel = () => (
  <Panel>
    <Grip><Dot /></Grip>
    <PanelTabs>
      {["part", "sheet", "config", "target", "ball"].map((n, i) => (
        <PanelTab key={n} $active={i === 0} aria-label={n}><Icon name={n} size={19} /></PanelTab>
      ))}
      <Chevron aria-label="next">
        <Svg width="8" height="12" viewBox="0 0 8 12"><path d="M2 1L6 6L2 11" fill="none" stroke="#555" strokeWidth="2" /></Svg>
      </Chevron>
    </PanelTabs>
    <FilterBox><Icon name="filter" /><input aria-label="Фильтр" /></FilterBox>
    <Tree>
      <TreeRow>
        <Icon name="part" />
        <NodeLabel>Деталь2&nbsp; (По умолчанию&lt;&lt;По умолчанию&gt;</NodeLabel>
      </TreeRow>
      {nodes.map(([icon, label, open], i) => (
        <TreeRow key={label} $last={i === nodes.length - 1}>
          <Arrow $show={open} />
          <NodeLabel $selected={i === nodes.length - 1}><Icon name={icon} />{label}</NodeLabel>
        </TreeRow>
      ))}
    </Tree>
    <Scroll>
      <ScrollButton aria-label="scroll left"><Triangle $left /></ScrollButton>
      <ScrollButton $w={136} aria-label="scroll thumb" />
      <ScrollButton $end aria-label="scroll right"><Triangle /></ScrollButton>
    </Scroll>
    <Flyout aria-label="collapse"><Dot /></Flyout>
  </Panel>
);

/* ---------- viewport ---------- */

const Viewport = styled.section`
  position: relative;
  flex: 1;
  min-width: 0;
  background: ${theme.sky};
`;

const Canvas = styled.svg`
  display: block;
  width: 100%;
  height: 100%;
`;

const HeadsUp = styled.div`
  position: absolute;
  top: 2px;
  left: 0;
  right: 0;
  display: flex;
  justify-content: center;
  padding-right: 4px;
`;

const TaskPane = styled.div`
  position: absolute;
  top: 22px;
  right: 0;
  display: flex;
  flex-direction: column;
  width: 33px;
  border: 1px solid ${theme.line};
  border-right: 0;
  & > button {
    width: 100%;
    height: 30px;
    background: ${theme.tab};
    border-bottom: 1px solid ${theme.line};
  }
  & > button:first-child { background: ${theme.face}; height: 29px; }
  & > button:last-child { border-bottom: 0; height: 29px; }
`;

const ViewName = styled.div`
  position: absolute;
  left: 12px;
  bottom: 0;
  color: #10202c;
  font: 700 17px/20px "Liberation Serif", serif;
`;

const headsUp = [
  ["zoomFit"], ["zoomArea"], ["previous"], ["section"], ["annotationView"], ["orient", true],
  ["display", true], ["eye", true], ["appearance"], ["scene", true], ["monitor", true],
];

const backEdge = "M400 322L495 402L560 454L620 502C640 515 655 527 670 536C700 553 735 570 778 581L873 598L1156 671";
const frontEdge = "L494 417L557 468L617 514L668 547L715 571L770 589L865 607L1148 679";
const vertices = [[400, 322], [495, 402], [778, 581], [873, 598], [1156, 671], [1158, 527], [1187, 535], [1187, 752], [400, 538]];

const Model = () => (
  <Canvas viewBox="316 148 964 803" role="img" aria-label="Деталь2">
    <g stroke="#111" strokeLinejoin="round">
      <path d={backEdge + "L1148 679L865 607L770 589L715 571L668 547L617 514L557 468L494 417L391 330Z"} fill="#cdcbdc" />
      <path d={"M391 330" + frontEdge + "L1150 669V625L1152 600V570L1150 536L1178 544V759L391 546Z"} fill="#c4c3ca" />
      <path d="M1150 536L1158 527L1187 535L1178 544Z" fill="#cac8d0" />
      <path d="M1178 544L1187 535V752L1178 759Z" fill="#e5e3fa" />
    </g>
    <g fill="none" stroke="#16cc1b" strokeWidth="2">
      <path d="M400 322L495 402" />
      <path d="M495 402L560 454L620 502C640 515 655 527 670 536C700 553 735 570 778 581" strokeDasharray="14 4" />
      <path d="M778 581L873 598L1156 671" />
      <path d="M400 322V538L1187 752" strokeDasharray="4 4" />
      <path d="M1158 527L1187 535V752" strokeDasharray="5 2" />
      <path d="M1159 530V580L1160 630L1156 671" strokeDasharray="10 12" />
    </g>
    {vertices.map(([x, y]) => <circle key={x + "-" + y} cx={x} cy={y} r="3" fill="#16cc1b" />)}
    <g strokeLinecap="round">
      <path d="M366 883V860" stroke="#176b24" strokeWidth="5" />
      <path d="M366 851L361 863Q366 866 371 863Z" fill="#2a8b35" stroke="#145c20" />
      <path d="M368 884L389 889" stroke="#c51b20" strokeWidth="5" />
      <path d="M399 891L388 884V894Z" fill="#ef3b3b" stroke="#b6161a" />
      <path d="M364 885L356 892" stroke="#191b9c" strokeWidth="5" />
      <path d="M348 898L350 890L355 889L359 894L357 899Z" fill="#1818c2" stroke="#101096" />
    </g>
    <g fontFamily="Liberation Serif, serif" fontSize="14">
      <text x="362" y="850" fill="#138a43">Y</text>
      <text x="398" y="898" fill="#d92929">X</text>
      <text x="342" y="908" fill="#1f2cd0">Z</text>
    </g>
  </Canvas>
);

const View = () => (
  <Viewport>
    <Model />
    <HeadsUp>
      {headsUp.map(([n, menu]) => (
        <React.Fragment key={n}>
          <IconButton aria-label={n}><Icon name={n} /></IconButton>
          {menu && <IconButton $w={14} aria-label={n + " menu"}><Caret $color="#4483aa" /></IconButton>}
        </React.Fragment>
      ))}
    </HeadsUp>
    <TaskPane>
      {["house", "books", "folderOpen", "palette", "ball", "sheet", "chat"].map((n) => (
        <IconButton key={n} aria-label={n}><Icon name={n} size={19} /></IconButton>
      ))}
    </TaskPane>
    <ViewName>*Триметрия</ViewName>
  </Viewport>
);

/* ---------- bottom bars ---------- */

const SheetBar = styled.div`
  display: flex;
  flex: none;
  height: 21px;
  padding-left: 33px;
  border-top: 1px solid ${theme.line};
  border-bottom: 1px solid ${theme.line};
`;

const NavButton = styled.button`
  width: 20px;
  padding: 0;
  border: 1px solid #8787a0;
  background: #a9a9bd;
  svg { margin: auto; }
`;

const SheetTab = styled.button`
  padding: 0 ${(p) => (p.$wide ? 18 : 16)}px;
  padding-right: ${(p) => (p.$end ? 29 : 0)}px;
  min-width: ${(p) => (p.$active ? 91 : 165)}px;
  border: 0;
  border-right: 1px solid ${theme.line};
  background: ${(p) => (p.$active ? theme.face : theme.tab)};
  font-size: 15px;
  font-weight: ${(p) => (p.$active ? 700 : 400)};
  line-height: 19px;
  text-align: left;
`;

const StatusBar = styled.footer`
  display: flex;
  flex: none;
  height: 21px;
  padding: 1px 0 2px;
  background: ${theme.classic};
  border-bottom: 1px solid #fff;
  font: 14px/19px ${theme.tahoma};
`;

const Stripes = styled.span`
  width: ${(p) => p.$w}px;
  margin-left: ${(p) => (p.$first ? "auto" : 0)};
  background: repeating-linear-gradient(90deg, ${theme.face} 0 4px, ${theme.classic} 4px 8px);
`;

const Field = styled.span`
  display: flex;
  align-items: center;
  justify-content: ${(p) => (p.$end ? "flex-end" : "center")};
  width: ${(p) => p.$w}px;
  padding-right: ${(p) => (p.$end ? 13 : 0)}px;
  gap: 42px;
  white-space: nowrap;
  ${(p) => p.$sunken && css`border: 1px solid; border-color: #808080 #fff #fff #808080;`}
`;

const Up = styled.span`
  border: 3px solid transparent;
  border-top: 0;
  border-bottom-color: #444;
`;

const TaskBar = styled.footer`
  display: flex;
  align-items: center;
  flex: none;
  height: 31px;
  padding: 0 2px;
  border-top: 1px solid #fff;
  background: ${theme.classic};
  font: 14px/20px ${theme.tahoma};
`;

const Start = styled.button`
  ${raised}
  display: flex;
  align-items: center;
  gap: 2px;
  width: 61px;
  height: 26px;
  margin-right: 10px;
  padding: 0 1px;
  font-weight: 700;
  font-size: 13px;
`;

const Program = styled.button`
  display: flex;
  align-items: center;
  justify-content: center;
  width: 36px;
  height: 26px;
  margin-right: 2px;
  padding: 0;
  border: 0;
  background: none;
  ${(p) => p.$open && raised}
  ${(p) => p.$active && css`
    border-color: #404040 #fff #fff #404040;
    box-shadow: inset 1px 1px #808080;
    background: #fff;
  `}
`;

const Tray = styled.div`
  display: flex;
  align-items: center;
  gap: 10px;
  height: 26px;
  margin-left: 8px;
  padding: 0 1px 0 16px;
  border: 1px solid;
  border-color: #808080 #fff #fff #808080;
  padding-left: 8px;
`;

const Language = styled.span`
  margin-left: auto;
  padding-right: 5px;
  border-right: 1px solid #808080;
  font-family: "Liberation Sans", sans-serif;
`;

const programs = [
  ["explorer"], ["globe"], ["opera"], ["calc"], ["solid"], ["letterA", 1], ["viber", 1], ["pen", 1], ["neon"],
  ["word"], ["compass"], ["excel", 1], ["oval"], ["caliper"], ["chrome", 1], ["solid", 2], ["paint", 1],
];

const navShapes = ["M3 1V11M9 1L4 6L9 11Z", "M8 1L3 6L8 11Z", "M4 1L9 6L4 11Z", "M9 1V11M3 1L8 6L3 11Z"];

const Bottom = () => (
  <>
    <SheetBar>
      {navShapes.map((d) => (
        <NavButton key={d} aria-label="sheet">
          <Svg width="12" height="12" viewBox="0 0 12 12"><path d={d} fill="#8585a0" stroke="#77778f" /></Svg>
        </NavButton>
      ))}
      <SheetTab $active>Модель</SheetTab>
      <SheetTab $wide>Трехмерные виды</SheetTab>
      <SheetTab $wide $end>Исследование движения 1</SheetTab>
    </SheetBar>
    <StatusBar>
      <span>SOLIDWORKS Premium 2016 x64 Edition</span>
      <Stripes $w={28} $first />
      <Field $w={156} $sunken>Редактируется Деталь</Field>
      <Stripes $w={28} />
      <Field $w={144} $end>ММГС<Up /></Field>
      <Stripes $w={48} />
      <Field $w={24}><Icon name="tag" size={18} /></Field>
    </StatusBar>
    <TaskBar>
      <Start><Icon name="windows" size={18} />Пуск</Start>
      {programs.map(([n, s], i) => (
        <Program key={i} $open={s > 0} $active={s === 2} aria-label={n}><Icon name={n} /></Program>
      ))}
      <Language>RU</Language>
      <Tray>
        <Svg width="8" height="12" viewBox="0 0 8 12"><path d="M1 5L4 2L7 5M1 10L4 7L7 10" fill="none" stroke="#111" strokeWidth="1.500" /></Svg>
        <Icon name="speaker" />
        <Icon name="signal" />
        <time>12:07</time>
        <Icon name="desktop" />
      </Tray>
    </TaskBar>
  </>
);

function App() {
  return (
    <Screen>
      <GlobalStyle />
      <Title />
      <Ribbon />
      <CommandTabs />
      <Work>
        <SideBar />
        <FeaturePanel />
        <View />
      </Work>
      <Bottom />
    </Screen>
  );
}

export default App;
